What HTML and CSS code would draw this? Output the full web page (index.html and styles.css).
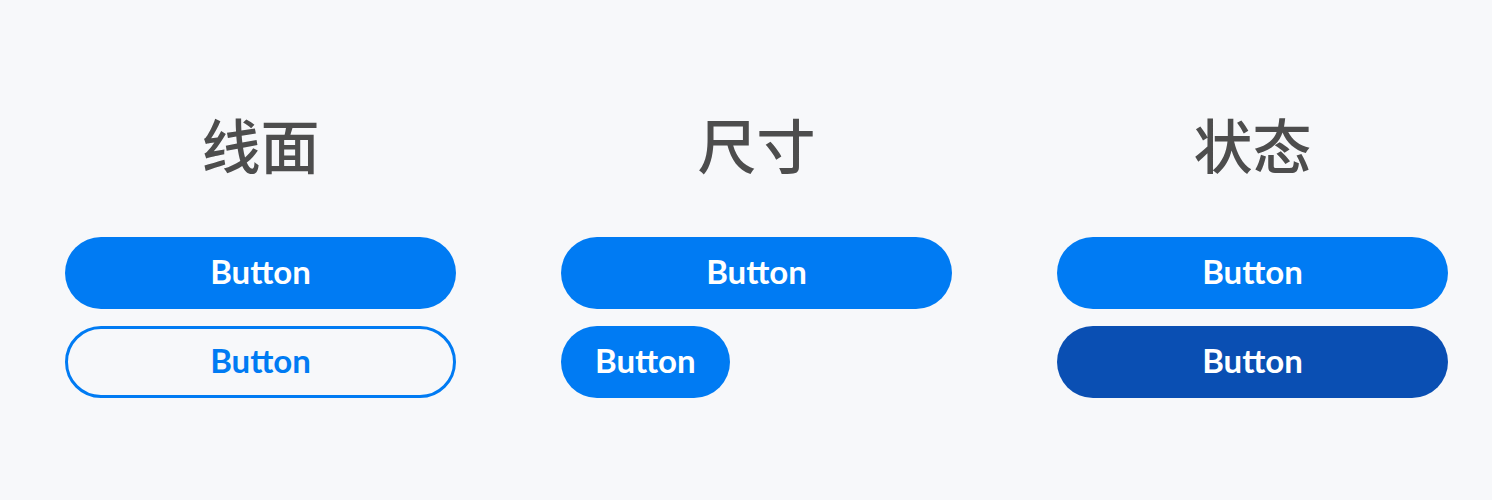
FILE: index.html
```html
<!DOCTYPE html>
<html lang="zh-CN">
<head>
    <meta charset="UTF-8">
    <meta name="viewport" content="width=device-width, initial-scale=1.0">
    <title>Button</title>
    <link rel="stylesheet" href="styles.css">
</head>
<body>
    <div class="columns">
        <section class="group">
            <h2 class="group-title">线面</h2>
            <button class="btn">Button</button>
            <button class="btn btn-outline">Button</button>
        </section>

        <section class="group">
            <h2 class="group-title">尺寸</h2>
            <button class="btn">Button</button>
            <button class="btn btn-small">Button</button>
        </section>

        <section class="group">
            <h2 class="group-title">状态</h2>
            <button class="btn">Button</button>
            <button class="btn btn-pressed">Button</button>
        </section>
    </div>
</body>
</html>
```

FILE: styles.css
```css
* {
    margin: 0;
    padding: 0;
    box-sizing: border-box;
}

body {
    background-color: #f7f8fa;
    font-family: Lato, "Noto Sans CJK SC", sans-serif;
    padding: 104px 0 0 65px;
    min-height: 100vh;
}

.columns {
    display: grid;
    grid-template-columns: repeat(3, 391px);
    column-gap: 105px;
}

.group {
    display: flex;
    flex-direction: column;
    align-items: flex-start;
    gap: 17px;
}

.group-title {
    align-self: stretch;
    text-align: center;
    font-family: "Noto Sans CJK SC", sans-serif;
    font-size: 59px;
    font-weight: 500;
    line-height: 80px;
    color: #4d4d4d;
    margin-bottom: 36px;
}

.btn {
    width: 391px;
    height: 72px;
    padding-bottom: 4px;
    border: none;
    border-radius: 36px;
    background: #007bf3;
    color: #ffffff;
    font-family: Lato, sans-serif;
    font-size: 33px;
    font-weight: 700;
    cursor: pointer;
}

.btn-outline {
    background: transparent;
    border: 3px solid #007bf3;
    color: #007bf3;
}

.btn-small {
    width: auto;
    padding: 0 34px 4px;
}

.btn-pressed {
    background: #0a4fb3;
}
```
